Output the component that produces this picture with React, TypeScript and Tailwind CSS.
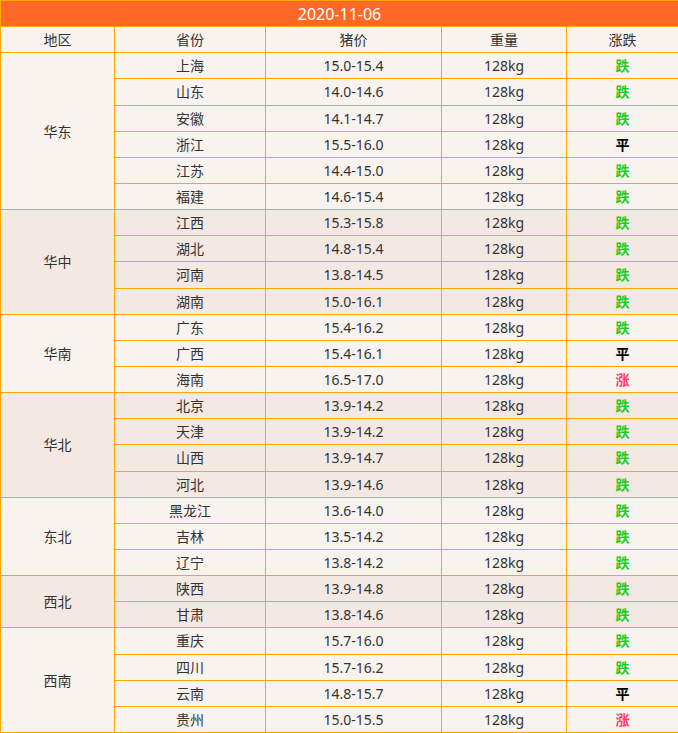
const GROUPS: { region: string; shade: boolean; rows: [string, string, string][] }[] = [
  {
    region: '华东',
    shade: false,
    rows: [
      ['上海', '15.0-15.4', '跌'],
      ['山东', '14.0-14.6', '跌'],
      ['安徽', '14.1-14.7', '跌'],
      ['浙江', '15.5-16.0', '平'],
      ['江苏', '14.4-15.0', '跌'],
      ['福建', '14.6-15.4', '跌'],
    ],
  },
  {
    region: '华中',
    shade: true,
    rows: [
      ['江西', '15.3-15.8', '跌'],
      ['湖北', '14.8-15.4', '跌'],
      ['河南', '13.8-14.5', '跌'],
      ['湖南', '15.0-16.1', '跌'],
    ],
  },
  {
    region: '华南',
    shade: false,
    rows: [
      ['广东', '15.4-16.2', '跌'],
      ['广西', '15.4-16.1', '平'],
      ['海南', '16.5-17.0', '涨'],
    ],
  },
  {
    region: '华北',
    shade: true,
    rows: [
      ['北京', '13.9-14.2', '跌'],
      ['天津', '13.9-14.2', '跌'],
      ['山西', '13.9-14.7', '跌'],
      ['河北', '13.9-14.6', '跌'],
    ],
  },
  {
    region: '东北',
    shade: false,
    rows: [
      ['黑龙江', '13.6-14.0', '跌'],
      ['吉林', '13.5-14.2', '跌'],
      ['辽宁', '13.8-14.2', '跌'],
    ],
  },
  {
    region: '西北',
    shade: true,
    rows: [
      ['陕西', '13.9-14.8', '跌'],
      ['甘肃', '13.8-14.6', '跌'],
    ],
  },
  {
    region: '西南',
    shade: false,
    rows: [
      ['重庆', '15.7-16.0', '跌'],
      ['四川', '15.7-16.2', '跌'],
      ['云南', '14.8-15.7', '平'],
      ['贵州', '15.0-15.5', '涨'],
    ],
  },
]

const TREND_COLOR: Record<string, string> = {
  跌: 'text-[#1fcc1f] font-bold',
  平: 'text-black font-bold',
  涨: 'text-[#ff3a5c] font-bold',
}

const cell = 'border border-[#ffa800] text-center align-middle p-0'

export default function App() {
  return (
    <div className="w-[678px] h-[733px] bg-white font-['Noto_Sans','Noto_Sans_CJK_SC',sans-serif] text-[14px] text-[#333]">
      <table className="w-[678px] border-collapse table-fixed">
        <colgroup>
          <col className="w-[114px]" />
          <col className="w-[151px]" />
          <col className="w-[176px]" />
          <col className="w-[125px]" />
          <col className="w-[112px]" />
        </colgroup>
        <thead>
          <tr className="h-[26.15px]">
            <th colSpan={5} className={`${cell} bg-[#ff6826] text-white text-[16px] font-normal`}>
              2020-11-06
            </th>
          </tr>
          <tr className="h-[26.15px] bg-[#f8f3ef]">
            {['地区', '省份', '猪价', '重量', '涨跌'].map((h) => (
              <th key={h} className={`${cell} font-normal`}>
                {h}
              </th>
            ))}
          </tr>
        </thead>
        <tbody>
          {GROUPS.map((g) =>
            g.rows.map(([prov, price, trend], i) => (
              <tr key={prov} className={`h-[26.15px] ${g.shade ? 'bg-[#f3e8e2]' : 'bg-[#f8f3ef]'}`}>
                {i === 0 && (
                  <td rowSpan={g.rows.length} className={cell}>
                    {g.region}
                  </td>
                )}
                <td className={cell}>{prov}</td>
                <td className={cell}>{price}</td>
                <td className={cell}>128kg</td>
                <td className={`${cell} ${TREND_COLOR[trend]}`}>{trend}</td>
              </tr>
            )),
          )}
        </tbody>
      </table>
    </div>
  )
}
